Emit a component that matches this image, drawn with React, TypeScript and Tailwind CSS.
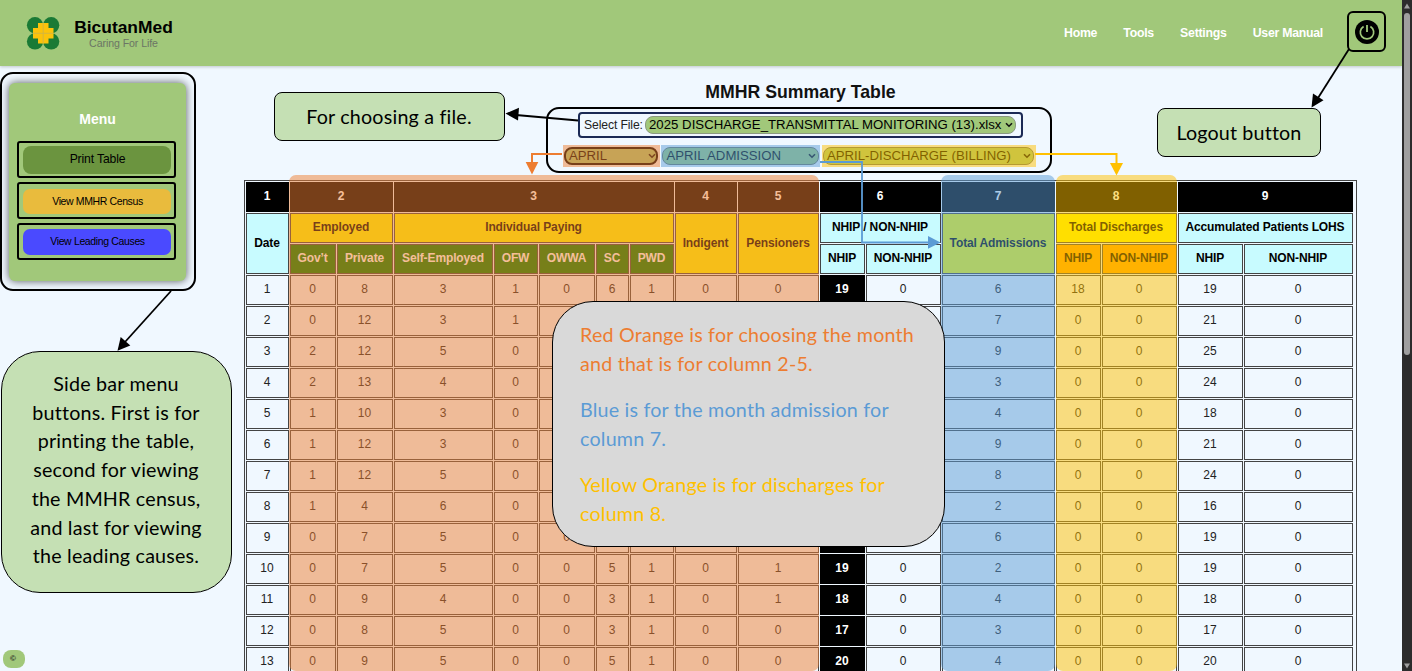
import React from "react";

const rows: string[][] = [
  ["1", "0", "8", "3", "1", "0", "6", "1", "0", "0", "19", "0", "6", "18", "0", "19", "0"],
  ["2", "0", "12", "3", "1", "", "", "", "", "", "", "", "7", "0", "0", "21", "0"],
  ["3", "2", "12", "5", "0", "", "", "", "", "", "", "", "9", "0", "0", "25", "0"],
  ["4", "2", "13", "4", "0", "", "", "", "", "", "", "", "3", "0", "0", "24", "0"],
  ["5", "1", "10", "3", "0", "", "", "", "", "", "", "", "4", "0", "0", "18", "0"],
  ["6", "1", "12", "3", "0", "", "", "", "", "", "", "", "9", "0", "0", "21", "0"],
  ["7", "1", "12", "5", "0", "", "", "", "", "", "", "", "8", "0", "0", "24", "0"],
  ["8", "1", "4", "6", "0", "", "", "", "", "", "", "", "2", "0", "0", "16", "0"],
  ["9", "0", "7", "5", "0", "0", "", "", "", "", "", "", "6", "0", "0", "19", "0"],
  ["10", "0", "7", "5", "0", "0", "5", "1", "0", "1", "19", "0", "2", "0", "0", "19", "0"],
  ["11", "0", "9", "4", "0", "0", "3", "1", "0", "1", "18", "0", "4", "0", "0", "18", "0"],
  ["12", "0", "8", "5", "0", "0", "3", "1", "0", "0", "17", "0", "3", "0", "0", "17", "0"],
  ["13", "0", "9", "5", "0", "0", "5", "1", "0", "0", "20", "0", "4", "0", "0", "20", "0"],
];

function Th({ className = "", children }: { className?: string; children: React.ReactNode }) {
  return (
    <div className={`flex items-center justify-center overflow-hidden whitespace-nowrap border pb-[2px] pr-px text-[12px] font-bold tracking-[-0.12px] ${className}`}>
      {children}
    </div>
  );
}

function Chevron() {
  return (
    <svg width="8" height="6" viewBox="0 0 8 6" className="shrink-0">
      <path d="M1 1.2 L4 4.2 L7 1.2" fill="none" stroke="#111" strokeWidth="1.6" />
    </svg>
  );
}

function Logo() {
  return (
    <svg width="34" height="34" viewBox="0 0 34 34">
      <g fill="#1a7a35">
        <circle cx="9" cy="9.200" r="8.100" />
        <circle cx="25.200" cy="9.200" r="8.100" />
        <circle cx="9" cy="25.400" r="8.100" />
        <circle cx="25.200" cy="25.400" r="8.100" />
      </g>
      <path d="M12 7h10.500v5h5v10.500h-5v5h-10.500v-5h-5v-10.500h5z" fill="#fcc30b" />
      <path d="M17.200 7v20.500M7 17.300h20.500" stroke="#d0b545" strokeWidth="0.9" />
    </svg>
  );
}

const cyan = "border-[#444] bg-[#c8fbff] text-black";
const yellow = "border-[#444] bg-[#ffff00] text-black";
const green = "border-[#444] bg-[#008000] text-white";
const orange = "border-[#444] bg-[#ffa500] text-black";
const black = "border-black bg-black text-white";

export default function App() {
  return (
    <div className="relative flex h-[671px] w-[1412px] overflow-hidden bg-[#f0f8ff] font-['Liberation_Sans',Arial,sans-serif] text-black">
      <div className="flex w-[1402px] flex-col">
        <header className="z-10 flex h-[66px] shrink-0 items-center bg-[#a1c87a] pl-[26px] shadow-[0_1px_3px_rgba(0,0,0,0.2)]">
          <Logo />
          <div className="ml-[13px] flex w-[101px] flex-col items-center">
            <div className="whitespace-nowrap text-[17.4px] font-bold leading-[20px]">BicutanMed</div>
            <div className="whitespace-nowrap text-[10.6px] leading-[12px] tracking-[-0.08px] text-[#6b7565]">Caring For Life</div>
          </div>
          <nav className="ml-auto flex gap-[26.2px] whitespace-nowrap text-[12.3px] font-bold tracking-[-0.26px] text-white">
            <span>Home</span>
            <span>Tools</span>
            <span>Settings</span>
            <span>User Manual</span>
          </nav>
          <div className="mr-[16px] ml-[24px] mt-[-3px] flex h-[41px] w-[39px] items-center justify-center rounded-[6px] border-2 border-black">
            <svg width="24" height="24" viewBox="0 0 24 24" fill="none">
              <circle cx="12" cy="12" r="12" fill="#000" />
              <path d="M8.600 6.500a6.700 6.700 0 1 0 6.800 0" stroke="#a1c87a" strokeWidth="1.7" />
              <path d="M12 5v7" stroke="#a1c87a" strokeWidth="1.8" />
            </svg>
          </div>
        </header>

        <main className="flex items-start">
          <aside className="mt-[6px] flex h-[219px] w-[196px] shrink-0 rounded-[13px] border-2 border-black pl-[7px] pt-[9px]">
            <div className="flex h-[198px] w-[177px] flex-col items-center rounded-[6px] bg-[#a1c87a] shadow-[0_0_8px_rgba(0,0,0,0.65)]">
              <div className="mt-[27px] text-[14px] font-bold leading-[18px] text-white">Menu</div>
              <div className="mr-[2px] mt-[13px] flex w-[159px] flex-col gap-[4px]">
                <div className="flex h-[37px] items-center justify-center rounded-[3px] border-2 border-black pl-px">
                  <div className="flex h-[28px] w-[148px] items-center justify-center rounded-[8px] bg-[#6b943f] pl-px text-[12.2px] tracking-[-0.15px]">Print Table</div>
                </div>
                <div className="flex h-[37px] items-center justify-center rounded-[3px] border-2 border-black pl-px">
                  <div className="mt-[2px] flex h-[25px] w-[148px] items-center justify-center rounded-[7px] bg-[#e9bb3d] pl-px text-[10.5px] tracking-[-0.38px]">View MMHR Census</div>
                </div>
                <div className="flex h-[37px] items-center justify-center rounded-[3px] border-2 border-black pl-px">
                  <div className="mt-[1px] flex h-[26px] w-[148px] items-center justify-center rounded-[7px] bg-[#4a4aff] pl-px text-[10.5px] tracking-[-0.36px]">View Leading Causes</div>
                </div>
              </div>
            </div>
          </aside>

          <section className="ml-[48px] flex w-[1113px] flex-col items-center">
            <h1 className="mt-[15px] whitespace-nowrap text-[17.7px] font-bold leading-[22px] text-[#111]">MMHR Summary Table</h1>
            <div className="mt-[4px] mr-[4px] flex h-[66px] w-[506px] flex-col items-center rounded-[13px] border-2 border-black pt-[3px]">
              <div className="ml-[4px] flex h-[26px] w-[445px] items-center gap-[3px] whitespace-nowrap rounded-[4px] border-2 border-[#1b2a55] pl-[4px]">
                <span className="w-[58px] text-[12.2px] tracking-[-0.12px] text-[#222]">Select File:</span>
                <span className="flex h-[18px] w-[371px] items-center justify-between rounded-[8px] border border-[#8a9a80] bg-[#a1c87a] pl-[3px] pr-[2px] text-[13.2px] tracking-[0.02px]">
                  <span>2025 DISCHARGE_TRANSMITTAL MONITORING (13).xlsx</span>
                  <Chevron />
                </span>
              </div>
              <div className="mt-[7px] flex gap-px self-start whitespace-nowrap pl-[15px] text-[13.2px]">
                <div className="relative flex h-[22px] w-[97px] items-center justify-center">
                  <span className="flex h-[18px] w-[94px] items-center justify-between rounded-[8px] border-2 border-black bg-[#a1c87a] pl-[3px] pr-0">
                    APRIL <Chevron />
                  </span>
                  <div className="absolute inset-0 bg-[#ed7d31]/50" />
                </div>
                <div className="relative flex h-[22px] w-[159px] items-center justify-center">
                  <span className="flex h-[18px] w-[157px] items-center justify-between rounded-[8px] border border-[#6b7565] bg-[#a1c87a] pl-[4px] pr-[2px]">
                    APRIL ADMISSION <Chevron />
                  </span>
                  <div className="absolute inset-0 bg-[#5b9bd5]/50" />
                </div>
                <div className="relative ml-px flex h-[22px] w-[214px] items-center justify-center">
                  <span className="flex h-[18px] w-[211px] items-center justify-between rounded-[8px] border border-[#6b7565] bg-[#a1c87a] pl-[3px] pr-[2px]">
                    APRIL-DISCHARGE (BILLING) <Chevron />
                  </span>
                  <div className="absolute inset-0 bg-[#ffc000]/50" />
                </div>
              </div>
            </div>

            <div className="relative mt-[7px] h-[500px] w-[1113px] border border-[#444] p-px">
              <div className="grid auto-rows-[30px] grid-cols-[43px_46px_56px_99px_44px_56px_33px_44px_62px_81px_45px_75px_113px_45px_75px_65px_109px] gap-px text-[12px]">
                <Th className={black}>1</Th>
                <Th className={`col-span-2 ${black}`}>2</Th>
                <Th className={`col-span-5 ${black}`}>3</Th>
                <Th className={black}>4</Th>
                <Th className={black}>5</Th>
                <Th className={`col-span-2 ${black}`}>6</Th>
                <Th className={black}>7</Th>
                <Th className={`col-span-2 ${black}`}>8</Th>
                <Th className={`col-span-2 ${black}`}>9</Th>

                <Th className={`row-span-2 ${cyan}`}>Date</Th>
                <Th className={`col-span-2 ${yellow}`}>Employed</Th>
                <Th className={`col-span-5 ${yellow}`}>Individual Paying</Th>
                <Th className={`row-span-2 ${yellow}`}>Indigent</Th>
                <Th className={`row-span-2 ${yellow}`}>Pensioners</Th>
                <Th className={`col-span-2 ${cyan}`}>NHIP / NON-NHIP</Th>
                <Th className={`row-span-2 ${yellow}`}>Total Admissions</Th>
                <Th className={`col-span-2 ${yellow}`}>Total Discharges</Th>
                <Th className={`col-span-2 ${cyan}`}>Accumulated Patients LOHS</Th>
                <Th className={green}>Gov’t</Th>
                <Th className={green}>Private</Th>
                <Th className={green}>Self-Employed</Th>
                <Th className={green}>OFW</Th>
                <Th className={green}>OWWA</Th>
                <Th className={green}>SC</Th>
                <Th className={green}>PWD</Th>
                <Th className={cyan}>NHIP</Th>
                <Th className={cyan}>NON-NHIP</Th>
                <Th className={orange}>NHIP</Th>
                <Th className={orange}>NON-NHIP</Th>
                <Th className={cyan}>NHIP</Th>
                <Th className={cyan}>NON-NHIP</Th>

                {rows.map((r) =>
                  r.map((v, i) => (
                    <div
                      key={`${r[0]}-${i}`}
                      className={
                        i === 10
                          ? "flex items-center justify-center border border-black bg-black pb-[2px] pr-px font-bold text-white"
                          : "flex items-center justify-center border border-[#444] pb-[2px] pr-px text-[#222]"
                      }
                    >
                      {v}
                    </div>
                  ))
                )}
              </div>
              <div className="absolute left-[44px] top-[-6px] h-[496px] w-[530px] rounded-[7px] bg-[#ed7d31]/50" />
              <div className="absolute left-[696px] top-[-6px] h-[496px] w-[114px] rounded-[7px] bg-[#5b9bd5]/50" />
              <div className="absolute left-[811px] top-[-6px] h-[496px] w-[121px] rounded-[7px] bg-[#ffc000]/50" />
            </div>
          </section>
        </main>
      </div>

      <div className="z-20 flex w-[10px] flex-col items-center justify-between bg-[#2c2c2c] pb-[2px] pt-[3px]">
        <div className="flex flex-col items-center gap-[4px]">
          <svg width="8" height="6" viewBox="0 0 8 6"><path d="M4 0.5 L7 5.5 H1 Z" fill="#9f9f9f" /></svg>
          <div className="h-[342px] w-[6px] rounded-full bg-[#9f9f9f]" />
        </div>
        <svg width="8" height="6" viewBox="0 0 8 6"><path d="M4 5.5 L7 0.5 H1 Z" fill="#9f9f9f" /></svg>
      </div>

      <svg className="pointer-events-none absolute inset-0 z-20" width="1412" height="671" viewBox="0 0 1412 671" fill="none">
        <path d="M578 120.5 L516 115" stroke="#000" strokeWidth="1.8" />
        <path d="M505.500 113.500 L519 107.800 L518 120.600 Z" fill="#000" />
        <path d="M1349 49 L1318 98" stroke="#000" strokeWidth="1.8" />
        <path d="M1311.500 107.500 L1313 93.500 L1323.500 100.300 Z" fill="#000" />
        <path d="M171 291 L125 342" stroke="#000" strokeWidth="1.8" />
        <path d="M117.500 350.800 L120.700 337 L130.300 345.600 Z" fill="#000" />
        <path d="M562 154 H532 V163" stroke="#ed7d31" strokeWidth="2" />
        <path d="M525.700 162 H538.300 L532 174.500 Z" fill="#ed7d31" />
        <path d="M820 162 H862 V242.500 H930" stroke="#5b9bd5" strokeWidth="1.8" />
        <path d="M928 236 L940.500 242.500 L928 248.800 Z" fill="#5b9bd5" />
        <path d="M1035 154 H1116.500 V164" stroke="#ffc000" strokeWidth="2" />
        <path d="M1110 163 H1123 L1116.500 175.500 Z" fill="#ffc000" />
      </svg>

      <div className="absolute left-[274px] top-[92px] z-20 flex h-[49px] w-[231px] items-center justify-center whitespace-nowrap rounded-[8px] border border-black bg-[#c5e0b4] pr-px font-['Lato',sans-serif] text-[19.7px] tracking-[0.2px]">
        For choosing a file.
      </div>
      <div className="absolute left-[1157px] top-[108px] z-20 flex h-[49px] w-[164px] items-center justify-center whitespace-nowrap rounded-[8px] border border-black bg-[#c5e0b4] font-['Lato',sans-serif] text-[19.7px] tracking-[0.15px]">
        Logout button
      </div>
      <div className="absolute left-[1px] top-[351px] z-20 flex h-[242px] w-[231px] flex-col items-center justify-center whitespace-nowrap rounded-[39px] border border-black bg-[#c5e0b4] pb-[3px] pr-[1px] font-['Lato',sans-serif] text-[19.7px] leading-[28.7px] tracking-[0.2px]">
        <span>Side bar menu</span>
        <span>buttons. First is for</span>
        <span>printing the table,</span>
        <span>second for viewing</span>
        <span>the MMHR census,</span>
        <span>and last for viewing</span>
        <span>the leading causes.</span>
      </div>
      <div className="absolute left-[552px] top-[301px] z-20 flex h-[246px] w-[393px] flex-col gap-[17.5px] whitespace-nowrap rounded-[41px] border border-black bg-[#d9d9d9] pl-[27px] pt-[19px] font-['Lato',sans-serif] text-[19.7px] leading-[28.8px] tracking-[0.2px]">
        <p className="text-[#ed7d31]">Red Orange is for choosing the month<br />and that is for column 2-5.</p>
        <p className="text-[#5b9bd5]">Blue is for the month admission for<br />column 7.</p>
        <p className="text-[#ffc000]">Yellow Orange is for discharges for<br />column 8.</p>
      </div>

      <div className="absolute left-[3px] top-[650px] z-20 flex h-[18px] w-[22px] items-center justify-center rounded-[8px] bg-[#a1c87a] pr-[2px] text-[8px] font-bold text-[#222]">
        ©
      </div>
    </div>
  );
}
